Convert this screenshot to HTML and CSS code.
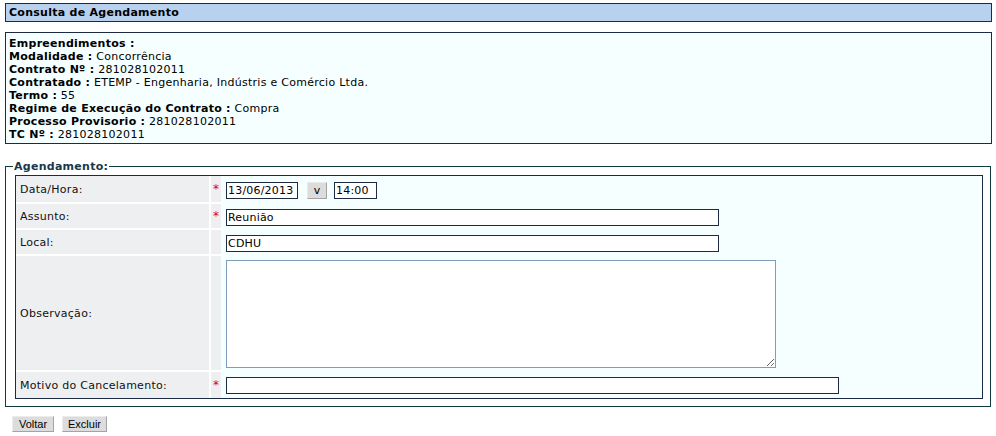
FILE: index.html
```html
<!DOCTYPE html>
<html lang="pt-BR">
<head>
<meta charset="utf-8">
<title>Consulta de Agendamento</title>
<link rel="stylesheet" href="styles.css">
</head>
<body>
<div class="page">
  <div class="title-bar">Consulta de Agendamento</div>

  <div class="info-box">
    <div><b>Empreendimentos :</b></div>
    <div><b>Modalidade :</b> Concorrência</div>
    <div><b>Contrato Nº :</b> 281028102011</div>
    <div><b>Contratado :</b> ETEMP - Engenharia, Indústris e Comércio Ltda.</div>
    <div><b>Termo :</b> 55</div>
    <div><b>Regime de Execução do Contrato :</b> Compra</div>
    <div><b>Processo Provisorio :</b> 281028102011</div>
    <div><b>TC Nº :</b> 281028102011</div>
  </div>

  <fieldset class="group">
    <legend class="group-title">Agendamento:</legend>
    <table class="form-table">
      <tr class="row-first">
        <td class="label">Data/Hora:</td>
        <td class="req">*</td>
        <td class="field">
          <div class="inline">
            <input class="inp inp-date" type="text" value="13/06/2013">
            <button class="btn-small" type="button">v</button>
            <input class="inp inp-time" type="text" value="14:00">
          </div>
        </td>
      </tr>
      <tr>
        <td class="label">Assunto:</td>
        <td class="req">*</td>
        <td class="field"><input class="inp inp-wide" type="text" value="Reunião"></td>
      </tr>
      <tr>
        <td class="label">Local:</td>
        <td class="req"></td>
        <td class="field"><input class="inp inp-wide" type="text" value="CDHU"></td>
      </tr>
      <tr class="row-obs">
        <td class="label">Observação:</td>
        <td class="req"></td>
        <td class="field"><textarea class="txt"></textarea></td>
      </tr>
      <tr class="row-last">
        <td class="label">Motivo do Cancelamento:</td>
        <td class="req">*</td>
        <td class="field"><input class="inp inp-motivo" type="text" value=""></td>
      </tr>
    </table>
  </fieldset>

  <div class="actions">
    <button class="btn" type="button">Voltar</button>
    <button class="btn" type="button">Excluir</button>
  </div>
</div>
</body>
</html>
```

FILE: styles.css
```css
html, body {
  margin: 0;
  padding: 0;
  background: #ffffff;
}

body {
  font-family: "DejaVu Sans", Verdana, sans-serif;
  font-size: 11px;
  letter-spacing: 0.27px;
  color: #000;
}

.page {
  padding: 3px 5px 0 5px;
  width: 987px;
}

.title-bar {
  height: 19px;
  box-sizing: border-box;
  border: 1px solid #1c2a44;
  background: #b8d1ee;
  font-weight: bold;
  line-height: 17px;
  padding-left: 3px;
}

.info-box {
  margin-top: 10px;
  box-sizing: border-box;
  border: 1px solid #1c2a44;
  background: #f5ffff;
  padding: 4px 3px 0 3px;
  height: 112px;
  line-height: 13px;
}

.group {
  margin: 16px 1px 0 0;
  padding: 2px 7px 7px 9px;
  border: 1px solid #0f3a3f;
  min-width: 0;
}

.group-title {
  font-weight: bold;
  color: #17394a;
  padding: 0 1px;
  margin-left: -2px;
  line-height: 13px;
}

.form-table {
  width: 100%;
  border: 1px solid #1c2a44;
  border-collapse: separate;
  border-spacing: 0;
  background: #f5ffff;
}

.form-table td {
  padding: 0;
  vertical-align: middle;
}

.label {
  width: 189px;
  padding-left: 4px !important;
  background: #eeeff1;
  border-right: 2px solid #ffffff;
  border-bottom: 2px solid #ffffff;
  height: 24px;
  color: #111;
}

.req {
  width: 10px;
  background: #eeeff1;
  border-bottom: 2px solid #ffffff;
  color: #e00000;
  text-align: center;
  font-size: 12px;
  letter-spacing: 0;
}

.field {
  padding-left: 5px !important;
}

.row-first .label,
.row-first .req {
  height: 26px;
}

.row-obs .label,
.row-obs .req {
  height: 114px;
}

.row-last .label,
.row-last .req {
  border-bottom: 0;
  height: 26px;
}

.inline {
  display: flex;
  align-items: center;
}

.inp {
  display: block;
  box-sizing: border-box;
  height: 17px;
  border: 1px solid #1c2a44;
  background: #fff;
  font-family: "DejaVu Sans", Verdana, sans-serif;
  font-size: 11px;
  letter-spacing: 0.2px;
  color: #000;
  padding: 0 1px;
  margin: 0;
  outline: none;
}

.inp-date { width: 72px; }
.inp-time { width: 43px; }
.inp-wide { width: 493px; }
.inp-motivo { width: 613px; }

.btn-small {
  box-sizing: border-box;
  width: 20px;
  height: 17px;
  margin: 0 7px 0 9px;
  padding: 0;
  background: #dcdcdc;
  border: 1px solid;
  border-color: #eaeaea #a4a4a4 #a4a4a4 #eaeaea;
  font-family: "DejaVu Sans", Verdana, sans-serif;
  font-size: 11px;
  line-height: 13px;
  color: #000;
}

.txt {
  display: block;
  box-sizing: border-box;
  width: 550px;
  height: 108px;
  border: 1px solid #7f9db9;
  background: #fff;
  margin: 0;
  padding: 1px;
  font-family: "DejaVu Sans", Verdana, sans-serif;
  font-size: 11px;
}

.actions {
  display: flex;
  gap: 8px;
  padding: 9px 0 0 7px;
}

.btn {
  box-sizing: border-box;
  width: 42px;
  height: 16px;
  padding: 0;
  background: #dcdcdc;
  border: 1px solid;
  border-color: #ececec #a4a4a4 #a4a4a4 #ececec;
  font-family: "Liberation Sans", Arial, sans-serif;
  font-size: 11px;
  letter-spacing: 0;
  line-height: 13px;
  color: #000;
}

.btn + .btn {
  width: 45px;
}
```
